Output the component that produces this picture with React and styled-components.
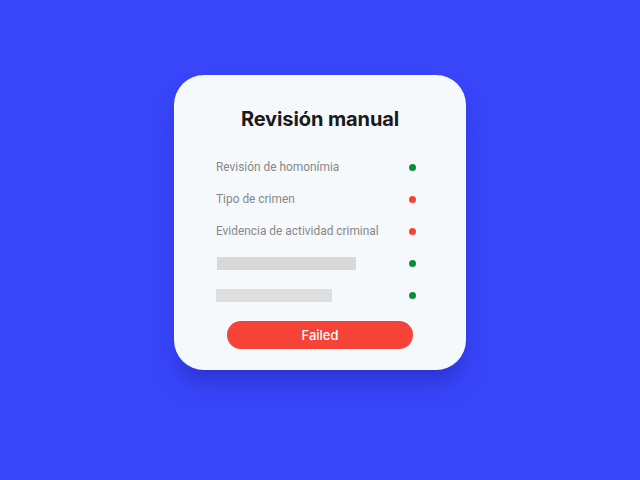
import styled, { createGlobalStyle } from "styled-components";

const GlobalStyle = createGlobalStyle`
body{
    margin: 0;
    background: #3845f9;
    font-family: "Inter", "Liberation Sans", sans-serif;
}
`

const Page = styled.div`
width: 640px;
height: 480px;
display: flex;
justify-content: center;
padding-top: 75px;
box-sizing: border-box;
`
const Card = styled.div`
width: 292px;
height: 295px;
box-sizing: border-box;
background: #f5f9fb;
border-radius: 30px;
padding: 31px 50px 0 42px;
box-shadow: 0 16px 22px -6px rgba(30, 36, 170, 0.55);
display: flex;
flex-direction: column;
`
const Title = styled.div`
font-size: 20px;
font-weight: 700;
color: #1a1a1a;
text-align: center;
letter-spacing: -0.1px;
margin-left: 8px;
line-height: 26px;
`
const List = styled.div`
margin-top: 25px;
display: flex;
flex-direction: column;
gap: 12px;
`
const Row = styled.div`
height: 20px;
display: flex;
align-items: center;
justify-content: space-between;
`
const Label = styled.div`
font-family: "Roboto", "Liberation Sans", sans-serif;
font-size: 11.9px;
color: #888888;
`
const Placeholder = styled.div`
height: 13px;
width: ${p => p.$w}px;
margin-left: ${p => p.$offset || 0}px;
background: ${p => p.$color};
`
const Dot = styled.div`
width: 7px;
height: 7px;
border-radius: 50%;
background: ${p => (p.$ok ? "#0c8a3c" : "#f44336")};
margin-right: 0.5px;
`
const Button = styled.div`
margin: 16px 0 0 11px;
width: 186px;
height: 28px;
border-radius: 14px;
background: #f64337;
color: #fff;
font-size: 13px;
font-weight: 500;
display: flex;
align-items: center;
justify-content: center;
`

const rows = [
    { label: "Revisión de homonímia", ok: true },
    { label: "Tipo de crimen", ok: false },
    { label: "Evidencia de actividad criminal", ok: false },
    { bar: 139, offset: 1, color: "#d8d8d8", ok: true },
    { bar: 116, color: "#dedede", ok: true },
]

const App = () => {
    return (
        <>
            <GlobalStyle />
            <Page>
                <Card>
                    <Title>Revisión manual</Title>
                    <List>
                        {rows.map((row, index) => (
                            <Row key={index}>
                                {row.label ? (
                                    <Label>{row.label}</Label>
                                ) : (
                                    <Placeholder $w={row.bar} $offset={row.offset} $color={row.color} />
                                )}
                                <Dot $ok={row.ok} />
                            </Row>
                        ))}
                    </List>
                    <Button>Failed</Button>
                </Card>
            </Page>
        </>
    );
}

export default App;
